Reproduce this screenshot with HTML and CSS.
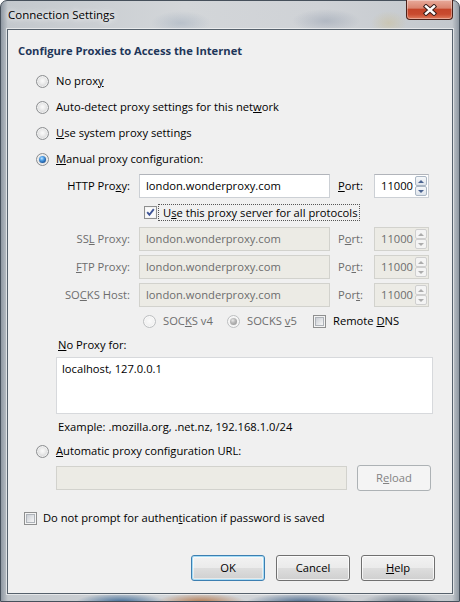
FILE: index.html
```html
<!DOCTYPE html>
<html>
<head>
<meta charset="utf-8">
<link rel="stylesheet" href="styles.css">
</head>
<body>
<div class="window">
  <div class="titlebar">
    <span class="title">Connection Settings</span>
    <div class="close">
      <svg width="16" height="12" viewBox="0 0 16 12">
        <path d="M4 2.5 L12 9.5 M12 2.5 L4 9.5" stroke="#3a1e1a" stroke-width="4.4" stroke-linecap="square" fill="none"/>
        <path d="M4 2.5 L12 9.5 M12 2.5 L4 9.5" stroke="#ffffff" stroke-width="2.4" stroke-linecap="square" fill="none"/>
      </svg>
    </div>
  </div>
  <div class="client">
    <div class="heading">Configure Proxies to Access the Internet</div>

    <div class="radios">
      <div class="row"><span class="radio"></span><span class="lbl">No prox<u>y</u></span></div>
      <div class="row"><span class="radio"></span><span class="lbl">Auto-detect proxy settings for this net<u>w</u>ork</span></div>
      <div class="row"><span class="radio"></span><span class="lbl"><u>U</u>se system proxy settings</span></div>
      <div class="row"><span class="radio"><span class="dot"></span></span><span class="lbl"><u>M</u>anual proxy configuration:</span></div>
    </div>

    <div class="proxygrid">
      <span class="plabel">HTTP Pro<u>x</u>y:</span>
      <span class="field">london.wonderproxy.com</span>
      <span class="portlabel"><u>P</u>ort:</span>
      <span class="port"><span class="num">11000</span><span class="spin"><i><b class="up"></b></i><i><b class="down"></b></i></span></span>

      <div class="sharerow">
        <span class="check"><span class="box checked"><svg width="9" height="9" viewBox="0 0 9 9"><path d="M1.2 4.2 L3.4 6.8 L7.8 1.2" stroke="#3f5597" stroke-width="1.9" fill="none" stroke-linejoin="miter"/></svg></span></span>
        <span class="focus">U<u>s</u>e this proxy server for all protocols</span>
      </div>

      <span class="plabel dis">SS<u>L</u> Proxy:</span>
      <span class="field disabled">london.wonderproxy.com</span>
      <span class="portlabel dis">P<u>o</u>rt:</span>
      <span class="port disabled"><span class="num">11000</span><span class="spin"><i><b class="up"></b></i><i><b class="down"></b></i></span></span>

      <span class="plabel dis"><u>F</u>TP Proxy:</span>
      <span class="field disabled">london.wonderproxy.com</span>
      <span class="portlabel dis">Po<u>r</u>t:</span>
      <span class="port disabled"><span class="num">11000</span><span class="spin"><i><b class="up"></b></i><i><b class="down"></b></i></span></span>

      <span class="plabel dis">SO<u>C</u>KS Host:</span>
      <span class="field disabled">london.wonderproxy.com</span>
      <span class="portlabel dis">Por<u>t</u>:</span>
      <span class="port disabled"><span class="num">11000</span><span class="spin"><i><b class="up"></b></i><i><b class="down"></b></i></span></span>

      <div class="socksrow">
        <span class="sitem v4"><span class="radio disabled"></span><span class="lbl dis">SOC<u>K</u>S v4</span></span>
        <span class="sitem v5"><span class="radio disabled"><span class="dot"></span></span><span class="lbl dis">SOCKS <u>v</u>5</span></span>
        <span class="sitem"><span class="check"><span class="box"></span></span><span class="lbl">Remote <u>D</u>NS</span></span>
      </div>
    </div>

    <div class="noproxy">
      <div class="nplabel"><u>N</u>o Proxy for:</div>
      <div class="textarea">localhost, 127.0.0.1</div>
      <div class="example">Example: .mozilla.org, .net.nz, 192.168.1.0/24</div>
    </div>

    <div class="row autorow"><span class="radio"></span><span class="lbl"><u>A</u>utomatic proxy configuration URL:</span></div>

    <div class="urlrow">
      <span class="field disabled urlfield"></span>
      <span class="btn btn-disabled">R<u>e</u>load</span>
    </div>

    <div class="row promptrow"><span class="check"><span class="box"></span></span><span class="lbl">Do not prompt for authen<u>t</u>ication if password is saved</span></div>

    <div class="buttons">
      <span class="btn btn-default">OK</span>
      <span class="btn">Cancel</span>
      <span class="btn"><u>H</u>elp</span>
    </div>
  </div>
</div>
</body>
</html>
```

FILE: styles.css
```css
html, body {
  margin: 0;
  padding: 0;
}
body {
  font-family: "Open Sans", "Liberation Sans", sans-serif;
  font-size: 11.2px;
  line-height: 16px;
  color: #000;
  width: 460px;
  height: 602px;
  overflow: hidden;
}
u {
  text-decoration: underline;
  text-decoration-thickness: 1px;
  text-underline-offset: 1px;
}

/* ---------- window frame ---------- */
.window {
  width: 460px;
  height: 602px;
  box-sizing: border-box;
  border: 1px solid #46505b;
  border-radius: 7px 7px 0 0;
  padding: 0 6px 7px 6px;
  display: flex;
  flex-direction: column;
  background:
    radial-gradient(ellipse 30px 12px at 180px 22px, rgba(125, 145, 170, .30), transparent),
    radial-gradient(ellipse 34px 12px at 325px 20px, rgba(110, 125, 150, .30), transparent),
    radial-gradient(ellipse 18px 12px at 388px 22px, rgba(205, 185, 125, .35), transparent),
    radial-gradient(ellipse 45px 9px at 120px 601px, rgba(40, 90, 140, .85), transparent),
    radial-gradient(ellipse 45px 9px at 200px 601px, rgba(175, 105, 55, .85), transparent),
    radial-gradient(ellipse 55px 9px at 300px 601px, rgba(35, 75, 120, .75), transparent),
    radial-gradient(ellipse 40px 9px at 400px 601px, rgba(60, 80, 100, .6), transparent),
    linear-gradient(to right, #8f98a2 0, #c3c8cd 1.5%, #d3d6d9 40%, #cfd2d6 70%, #c3c8cd 98.5%, #8f98a2 100%);
}
.titlebar {
  height: 28px;
  display: flex;
  align-items: center;
  flex: none;
}
.title {
  padding-left: 1px;
  color: #000;
  font-size: 11.5px;
  text-shadow: 0 0 5px #fff, 0 0 9px rgba(255, 255, 255, .9);
}
.close {
  margin-left: auto;
  align-self: flex-start;
  margin-top: -1px;
  width: 47px;
  height: 20px;
  box-sizing: border-box;
  border: 1px solid #4c2119;
  border-top: none;
  border-radius: 0 0 4px 4px;
  background: linear-gradient(#e8aa9b 0%, #da8570 42%, #c5452a 50%, #c94b2f 75%, #e07d5e 100%);
  box-shadow: inset 0 0 0 1px rgba(255, 255, 255, .35);
  display: flex;
  align-items: center;
  justify-content: center;
}

/* ---------- client area ---------- */
.client {
  flex: 1;
  display: flex;
  flex-direction: column;
  background: #f0f0f0;
  border: 1px solid #56616c;
  box-shadow: 0 0 0 1px rgba(255, 255, 255, .55);
}
.heading {
  margin: 13px 0 0 10px;
  font-weight: bold;
  color: #1e3659;
  line-height: 16px;
}

.radios {
  margin-top: 9px;
  padding-left: 28px;
}
.row {
  height: 26px;
  display: flex;
  align-items: center;
}
.lbl {
  margin-left: 7px;
  white-space: nowrap;
}
.dis {
  color: #6d6d6d;
}

/* radio */
.radio {
  width: 13px;
  height: 13px;
  flex: none;
  box-sizing: border-box;
  border-radius: 50%;
  border: 1px solid #8c8e90;
  background: radial-gradient(circle at 50% 45%, #fbfbfb 0, #ececec 35%, #d2d3d4 75%, #c4c5c6 100%);
  box-shadow: inset 0 0 0 1px rgba(255, 255, 255, .6);
  display: flex;
  align-items: center;
  justify-content: center;
}
.radio .dot {
  width: 7px;
  height: 7px;
  border-radius: 50%;
  background: radial-gradient(circle at 40% 35%, #c4e6ff 0, #55a5ea 30%, #1d5ba3 70%, #183f70 100%);
}
.radio.disabled {
  border-color: #bdbfc1;
  background: radial-gradient(circle at 50% 45%, #fbfbfb 0, #f2f2f2 50%, #e4e4e4 100%);
}
.radio.disabled .dot {
  background: radial-gradient(circle at 40% 35%, #e8e8e8 0, #b8b8b8 40%, #8e8e8e 100%);
}

/* checkbox */
.check {
  width: 13px;
  height: 13px;
  flex: none;
  box-sizing: border-box;
  border: 1px solid #8e8f8f;
  background: #f4f4f4;
  padding: 1px;
}
.check .box {
  display: block;
  width: 9px;
  height: 9px;
  box-sizing: border-box;
  border: 1px solid #aeb3b9;
  background: linear-gradient(135deg, #cbcfd5, #f6f6f6);
}
.check .box.checked {
  border: none;
  background: #fbfbfb;
}
.check .box svg {
  display: block;
}

/* ---------- proxy grid ---------- */
.proxygrid {
  margin-top: 2px;
  display: grid;
  grid-template-columns: 131px 191px 44px 55px;
  grid-template-rows: 24px 21px 24px 24px 24px 20px;
  row-gap: 4px;
}
.plabel {
  align-self: center;
  text-align: right;
  padding-right: 9px;
  white-space: nowrap;
}
.portlabel {
  align-self: center;
  padding-left: 8px;
}
.field {
  height: 24px;
  box-sizing: border-box;
  border: 1px solid #ccd0d5;
  border-top-color: #b1b4ba;
  background: #fff;
  padding: 0 6px;
  display: flex;
  align-items: center;
  white-space: nowrap;
}
.field.disabled {
  background: #ecebe5;
  border-color: #d2d2cd;
  color: #6d6d6d;
}
.port {
  height: 24px;
  box-sizing: border-box;
  border: 1px solid #ccd0d5;
  border-top-color: #b1b4ba;
  background: #fff;
  display: flex;
  padding: 1px;
}
.port .num {
  flex: 1;
  text-align: right;
  padding-right: 2px;
  align-self: center;
}
.port.disabled {
  background: #ecebe5;
  border-color: #d2d2cd;
  color: #6d6d6d;
}
.spin {
  width: 12px;
  display: flex;
  flex-direction: column;
  gap: 0;
}
.spin i {
  flex: 1;
  box-sizing: border-box;
  border: 1px solid #aab6c4;
  border-radius: 2px;
  background: linear-gradient(#f6f8fa, #dfe5ec);
  display: flex;
  align-items: center;
  justify-content: center;
}
.spin b {
  width: 0;
  height: 0;
  border-left: 3px solid transparent;
  border-right: 3px solid transparent;
}
.spin b.up {
  border-bottom: 3px solid #4a6390;
}
.spin b.down {
  border-top: 3px solid #4a6390;
}
.port.disabled .spin i {
  border-color: #cfcfcf;
  background: #f4f4f4;
}
.port.disabled .spin b.up {
  border-bottom-color: #acacac;
}
.port.disabled .spin b.down {
  border-top-color: #acacac;
}

.sharerow {
  grid-column: 2 / span 3;
  display: flex;
  align-items: center;
  padding-left: 5px;
}
.focus {
  margin-left: 1px;
  border: 1px dotted #555;
  padding: 0 1px 0 4px;
  line-height: 15px;
  white-space: nowrap;
}

.socksrow {
  grid-column: 2 / span 3;
  display: flex;
  align-items: center;
  padding-left: 4px;
}
.sitem {
  display: flex;
  align-items: center;
}
.sitem.v4 {
  width: 84px;
}
.sitem.v5 {
  width: 86px;
}

/* ---------- no proxy ---------- */
.noproxy {
  margin-top: 6px;
  padding-left: 48px;
}
.nplabel {
  padding-left: 2px;
}
.textarea {
  margin-top: 4px;
  width: 377px;
  height: 57px;
  box-sizing: border-box;
  background: #fff;
  border: 1px solid #d7d9dc;
  padding: 3px 5px;
}
.example {
  margin-top: 5px;
  padding-left: 2px;
}

.autorow {
  margin-top: 8px;
  height: 16px;
  padding-left: 28px;
}

.urlrow {
  margin-top: 6px;
  padding-left: 48px;
  display: flex;
  align-items: center;
  gap: 10px;
}
.urlfield {
  width: 291px;
}

.promptrow {
  margin-top: 19px;
  height: 16px;
  padding-left: 16px;
}
.promptrow .lbl {
  margin-left: 6px;
}

/* ---------- buttons ---------- */
.btn {
  width: 74px;
  height: 26px;
  box-sizing: border-box;
  border: 1px solid #707070;
  border-radius: 3px;
  background: linear-gradient(#f2f2f2 0%, #ebebeb 48%, #dddddd 52%, #cfcfcf 100%);
  box-shadow: inset 0 0 0 1px rgba(255, 255, 255, .75);
  display: flex;
  align-items: center;
  justify-content: center;
  white-space: nowrap;
}
.btn-default {
  border-color: #3c7fb1;
  box-shadow: inset 0 0 0 1px #a6dcf6, inset 0 0 0 2px rgba(255, 255, 255, .5);
}
.btn-disabled {
  border-color: #adb2b5;
  background: #f4f4f4;
  color: #838383;
  box-shadow: none;
}
.buttons {
  margin-top: 29px;
  display: flex;
  justify-content: flex-end;
  gap: 11px;
  padding-right: 17px;
}
```
